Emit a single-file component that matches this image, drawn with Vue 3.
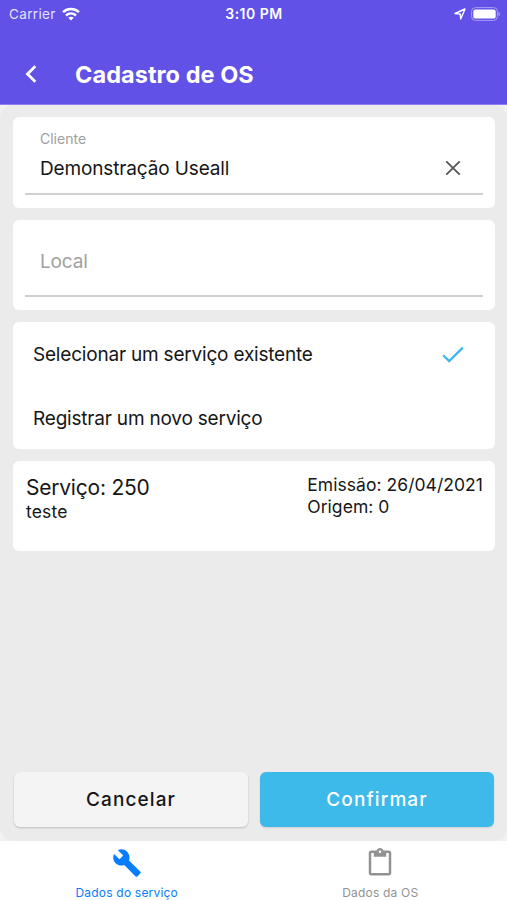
<template>
  <div class="app">
    <header>
      <div class="status">
        <div class="carrier">
          <span>Carrier</span>
          <svg width="18" height="14" viewBox="0 0 18 14" fill="none" stroke="#fff" stroke-width="2.5">
            <path d="M1 5.1C5.5.9 12.5.9 17 5.1" />
            <path d="M4 8.5c2.9-2.6 7.1-2.6 10 0" />
            <path d="M6.3 10.8C7.8 9.4 10.2 9.4 11.7 10.8L9 13.5Z" fill="#fff" stroke="none" />
          </svg>
        </div>
        <span class="time">3:10 PM</span>
        <div class="battery">
          <svg width="12" height="12" viewBox="0 0 12 12" fill="none" stroke="#fff" stroke-width="1.4" stroke-linejoin="round">
            <path d="M1 5.5 11 1 6.7 11 6.2 6Z" />
          </svg>
          <svg width="30" height="14" viewBox="0 0 30 14">
            <rect x=".6" y=".6" width="25.8" height="12.8" rx="3.8" fill="none" stroke="#a79ff3" />
            <rect x="2.3" y="2.4" width="22.4" height="9.2" rx="2.2" fill="#fff" />
            <path d="M27.5 4.8c2 .7 2 3.7 0 4.4Z" fill="#a79ff3" />
          </svg>
        </div>
      </div>
      <div class="toolbar">
        <button class="back">
          <svg width="12" height="18" viewBox="0 0 12 18" fill="none" stroke="#fff" stroke-width="2.8">
            <path d="M10.3 1.2 2.5 9l7.8 7.8" />
          </svg>
        </button>
        <h1>Cadastro de OS</h1>
      </div>
    </header>

    <div class="body">
      <main>
        <section class="card field">
          <div class="field-inner">
            <div>
              <label>Cliente</label>
              <p class="value">{{ client }}</p>
            </div>
            <button v-if="client" class="clear" @click="client = ''">
              <svg width="16" height="16" viewBox="0 0 16 16" fill="none" stroke="#555559" stroke-width="1.8">
                <path d="m1.3 1.3 13.4 13.4M14.7 1.3 1.3 14.7" />
              </svg>
            </button>
          </div>
        </section>

        <section class="card field">
          <div class="field-inner">
            <p class="placeholder">Local</p>
          </div>
        </section>

        <section class="card options">
          <div
            v-for="(el, i) in options"
            :key="el"
            class="option"
            @click="selected = i"
          >
            <span>{{ el }}</span>
            <svg v-if="selected === i" width="22" height="18" viewBox="0 0 22 18" fill="none" stroke="#3bb6e8" stroke-width="2.2">
              <path d="m1.2 9.3 6 5.8L20.8 1.6" />
            </svg>
          </div>
        </section>

        <section class="card service">
          <div>
            <p class="service-title">Serviço: 250</p>
            <p class="service-text">teste</p>
          </div>
          <div class="service-info">
            <p>Emissão: 26/04/2021</p>
            <p>Origem: 0</p>
          </div>
        </section>

        <div class="actions">
          <button class="cancel">Cancelar</button>
          <button class="confirm">Confirmar</button>
        </div>
      </main>
    </div>

    <nav>
      <div class="tab" :class="{ active: tab === 0 }" @click="tab = 0">
        <svg width="30" height="30" viewBox="0 0 24 24" fill="currentColor">
          <path d="m22.7 19-9.1-9.1c.9-2.3.4-5-1.5-6.9-2-2-5-2.4-7.4-1.3L9 6 6 9 1.6 4.7C.4 7.1.9 10.1 2.9 12.1c1.9 1.9 4.6 2.4 6.9 1.5l9.1 9.1c.4.4 1 .4 1.4 0l2.3-2.3c.5-.4.5-1.1.1-1.4z" />
        </svg>
        <span>Dados do serviço</span>
      </div>
      <div class="tab" :class="{ active: tab === 1 }" @click="tab = 1">
        <svg width="30" height="30" viewBox="0 0 24 24" fill="currentColor">
          <path d="M19 2h-4.18C14.4.84 13.3 0 12 0S9.6.84 9.18 2H5c-1.1 0-2 .9-2 2v16c0 1.1.9 2 2 2h14c1.1 0 2-.9 2-2V4c0-1.1-.9-2-2-2zm-7 0c.55 0 1 .45 1 1s-.45 1-1 1-1-.45-1-1 .45-1 1-1zm7 18H5V4h2v3h10V4h2v16z" />
        </svg>
        <span>Dados da OS</span>
      </div>
    </nav>
  </div>
</template>

<script setup>
import { ref } from "vue";

const client = ref("Demonstração Useall");
const options = ["Selecionar um serviço existente", "Registrar um novo serviço"];
const selected = ref(0);
const tab = ref(0);
</script>

<style>
body {
  margin: 0;
}
</style>

<style scoped>
* {
  margin: 0;
  padding: 0;
  box-sizing: border-box;
  font-family: Inter, "Liberation Sans", sans-serif;
}

.app {
  height: 900px;
  display: flex;
  flex-direction: column;
  color: #161616;
  background-color: #f1f1f1;
  white-space: nowrap;
}

button {
  border: none;
  background: none;
  cursor: pointer;
}

svg {
  display: block;
  flex-shrink: 0;
}

header {
  height: 105px;
  background-color: #6151e7;
  border-bottom: 1px solid #8c80ed;
  color: white;
}

.status {
  display: grid;
  grid-template-columns: 1fr auto 1fr;
  align-items: center;
  height: 27px;
  padding: 0 6px 0 9px;
  font-size: 13.5px;
}

.carrier {
  display: flex;
  align-items: center;
  gap: 6px;
  color: #e5e2ff;
  letter-spacing: 0.35px;
}

.time {
  margin-right: 2px;
  font-size: 14px;
  font-weight: 600;
  letter-spacing: 0.5px;
}

.battery {
  display: flex;
  justify-content: flex-end;
  align-items: center;
  gap: 5px;
}

.toolbar {
  display: flex;
  align-items: center;
  height: 94px;
  padding-left: 25px;
}

.back {
  width: 50px;
}

h1 {
  margin-top: 1px;
  font-size: 23.5px;
  font-weight: 700;
  letter-spacing: 0.05px;
}

.body {
  flex: 1;
}

main {
  height: 100%;
  display: flex;
  flex-direction: column;
  gap: 12px;
  padding: 12px 12px 14px 13px;
  border-radius: 14px;
  background-color: #ebebeb;
}

.card {
  border-radius: 6px;
  background-color: white;
}

.field {
  height: 90.5px;
  padding: 0 12px;
}

.field-inner {
  display: flex;
  justify-content: space-between;
  height: 77.5px;
  padding: 0 22px 0 15px;
  border-bottom: 2px solid #d0d0d0;
}

label {
  display: block;
  padding-top: 13px;
  font-size: 14px;
  line-height: 17px;
  color: #a0a0a0;
}

.value {
  margin-top: 10px;
  font-size: 19px;
  line-height: 24px;
  letter-spacing: -0.14px;
}

.clear {
  align-self: center;
  margin-top: 26px;
}

.placeholder {
  padding-top: 30px;
  font-size: 19px;
  line-height: 24px;
  letter-spacing: -0.16px;
  color: #a0a0a0;
}

.options {
  height: 127px;
}

.option {
  display: flex;
  align-items: center;
  justify-content: space-between;
  height: 63.5px;
  padding: 2px 31px 0 20px;
  font-size: 19px;
  letter-spacing: -0.2px;
}

.service {
  display: flex;
  justify-content: space-between;
  height: 90px;
  padding: 13px 12px 13px 13px;
}

.service-title {
  font-size: 21px;
  line-height: 27px;
  letter-spacing: -0.22px;
}

.service-text {
  font-size: 17.5px;
  line-height: 22px;
  letter-spacing: 0.15px;
}

.service-info {
  font-size: 17.5px;
  line-height: 22px;
  letter-spacing: 0.05px;
}

.actions {
  display: grid;
  grid-template-columns: 1fr 1fr;
  gap: 12px;
  margin: auto 1px 0;
}

.actions button {
  height: 55px;
  border-radius: 6px;
  font-size: 19px;
  font-weight: 500;
  letter-spacing: 1.1px;
}

.actions .cancel {
  background-color: #f4f4f4;
  color: #161616;
  box-shadow: 0 1px 2px rgba(0, 0, 0, 0.2);
}

.actions .confirm {
  background-color: #3db9ea;
  color: white;
  box-shadow: 0 1px 2px rgba(0, 0, 0, 0.12);
}

nav {
  display: grid;
  grid-template-columns: 1fr 1fr;
  height: 59px;
  background-color: white;
}

.tab {
  display: flex;
  flex-direction: column;
  align-items: center;
  gap: 7px;
  padding-top: 7px;
  font-size: 12px;
  line-height: 15px;
  letter-spacing: 0.2px;
  color: #929292;
  cursor: pointer;
}

.active {
  color: #087dff;
}
</style>
